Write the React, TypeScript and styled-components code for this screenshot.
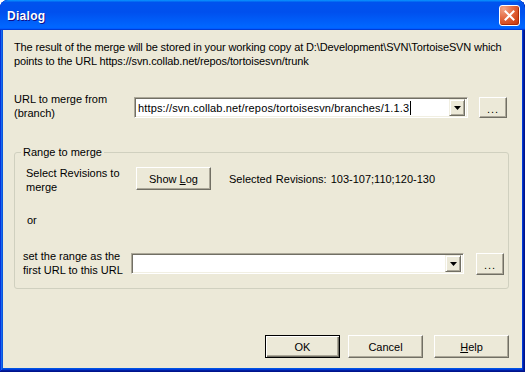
import React from 'react'
import styled, { createGlobalStyle } from 'styled-components'

const GlobalStyle = createGlobalStyle`
  html, body {
    margin: 0;
    padding: 0;
    background: #ffffff;
  }
  body {
    font-family: "Liberation Sans", Arial, sans-serif;
    font-size: 11px;
    color: #000000;
  }
`

const Window = styled.div`
  width: 525px;
  height: 372px;
  box-sizing: border-box;
  display: flex;
  flex-direction: column;
  padding: 0 3px 4px 3px;
  background: #0054e3;
  border-radius: 8px 8px 0 0;
  overflow: hidden;
  box-shadow: inset -1px -1px #00138c, inset 1px 1px #0831d9, inset -2px -2px #001ea0,
    inset 2px 2px #166aee, inset -3px -3px #003bda, inset 3px 3px #0855dd;
`

const TitleBar = styled.div`
  height: 30px;
  margin: 0 -3px;
  display: flex;
  align-items: center;
  justify-content: space-between;
  padding: 0 5px 0 7px;
  background: linear-gradient(
    180deg,
    #0997ff,
    #0053ee 8%,
    #0050ee 40%,
    #06f 88%,
    #06f 93%,
    #005bff 95%,
    #003dd7 96%,
    #003dd7
  );
  border-radius: 8px 8px 0 0;
`

const TitleText = styled.div`
  font-family: "Liberation Sans", Arial, sans-serif;
  font-weight: bold;
  font-size: 12px;
  color: #ffffff;
  text-shadow: 1px 1px #0f1089;
  margin-top: 2px;
  letter-spacing: 0.3px;
`

const CloseButton = styled.div`
  width: 19px;
  height: 19px;
  border: 1px solid #ffffff;
  border-radius: 3px;
  display: flex;
  align-items: center;
  justify-content: center;
  background: radial-gradient(circle at 20% 15%, #f2a587 0%, #e46c44 40%, #d3471a 75%, #c2360d 100%);
  box-shadow: inset -1px -1px #b02c07;
`

const Client = styled.div`
  flex: 1;
  background: #ece9d8;
  padding: 10px 13px 0 11px;
  display: flex;
  flex-direction: column;
`

const Info = styled.div`
  line-height: 14px;
  white-space: nowrap;
  letter-spacing: -0.12px;
`

const Label = styled.div<{ $width: number }>`
  width: ${(p) => p.$width}px;
  line-height: 14px;
`

const UrlRow = styled.div`
  display: flex;
  align-items: flex-start;
  margin-top: 24px;
`

const Combo = styled.div<{ $width: number; $top: number }>`
  width: ${(p) => p.$width}px;
  height: 21px;
  box-sizing: border-box;
  margin-top: ${(p) => p.$top}px;
  display: flex;
  align-items: center;
  background: #ffffff;
  border: 1px solid;
  border-color: #aca899 #ffffff #ffffff #aca899;
  box-shadow: inset 1px 1px #716f64, inset -1px -1px #f1efe2;
  padding: 0 2px 0 2px;
`

const ComboText = styled.div`
  flex: 1;
  padding-left: 1px;
  line-height: 14px;
  white-space: nowrap;
  display: flex;
  align-items: center;
  letter-spacing: 0.15px;
`

const Caret = styled.span`
  display: inline-block;
  width: 1px;
  height: 14px;
  background: #000000;
  margin-left: 1px;
`

const DropButton = styled.div`
  width: 16px;
  height: 17px;
  box-sizing: border-box;
  display: flex;
  align-items: center;
  justify-content: center;
  background: #ece9d8;
  border: 1px solid;
  border-color: #f1efe2 #716f64 #716f64 #f1efe2;
  box-shadow: inset 1px 1px #ffffff, inset -1px -1px #aca899;
`

const Button = styled.div<{ $width: number; $height?: number; $default?: boolean }>`
  width: ${(p) => p.$width}px;
  height: ${(p) => p.$height ?? 23}px;
  box-sizing: border-box;
  display: flex;
  align-items: center;
  justify-content: center;
  background: #ece9d8;
  border: 1px solid;
  border-color: ${(p) => (p.$default ? '#000000' : '#ffffff #716f64 #716f64 #ffffff')};
  box-shadow: ${(p) =>
    p.$default
      ? 'inset 1px 1px #ffffff, inset -1px -1px #716f64, inset -2px -2px #aca899'
      : 'inset -1px -1px #aca899'};
  line-height: 14px;
  white-space: pre;
`

const Dots = styled(Button)<{ $gap: number; $top: number }>`
  margin-left: ${(p) => p.$gap}px;
  margin-top: ${(p) => p.$top}px;
  letter-spacing: 1px;
  padding-top: 2px;
`

const Group = styled.fieldset`
  margin: 25px 0 0 0;
  padding: 0 0 11px 0;
  border: 1px solid #d0d0bf;
  border-radius: 3px;
`

const Legend = styled.legend`
  margin-left: 6px;
  padding: 0 2px;
  line-height: 14px;
`

const GroupRow = styled.div<{ $indent: number; $top: number }>`
  display: flex;
  align-items: flex-start;
  padding-left: ${(p) => p.$indent}px;
  margin-top: ${(p) => p.$top}px;
`

const Revisions = styled.div`
  margin-left: 18px;
  margin-top: 6px;
  line-height: 14px;
  word-spacing: 1px;
`

const LogButton = styled(Button)`
  margin-top: 1px;
`

const ButtonRow = styled.div`
  display: flex;
  justify-content: flex-end;
  margin-top: 46px;
`

const DialogButton = styled(Button)<{ $gap?: number }>`
  margin-left: ${(p) => p.$gap ?? 0}px;
`

const Caption = styled.span``

const Key = styled.span`
  text-decoration: underline;
`

const Arrow = () => (
  <svg width="7" height="4" viewBox="0 0 7 4">
    <path d="M0 0h7L3.5 4z" fill="#000" />
  </svg>
)

const CloseIcon = () => (
  <svg width="11" height="11" viewBox="0 0 11 11">
    <path d="M1.5 1.5l8 8M9.5 1.5l-8 8" stroke="#fff" strokeWidth="2" strokeLinecap="square" />
  </svg>
)

const App = () => {
  const url = 'https://svn.collab.net/repos/tortoisesvn/branches/1.1.3'
  return (
    <>
      <GlobalStyle />
      <Window>
        <TitleBar>
          <TitleText>Dialog</TitleText>
          <CloseButton>
            <CloseIcon />
          </CloseButton>
        </TitleBar>
        <Client>
          <Info>
            The result of the merge will be stored in your working copy at D:\Development\SVN\TortoiseSVN which
            <br />
            points to the URL https://svn.collab.net/repos/tortoisesvn/trunk
          </Info>

          <UrlRow>
            <Label $width={120}>
              URL to merge from
              <br />
              (branch)
            </Label>
            <Combo $width={334} $top={5}>
              <ComboText>
                {url}
                <Caret />
              </ComboText>
              <DropButton>
                <Arrow />
              </DropButton>
            </Combo>
            <Dots $width={28} $height={21} $gap={11} $top={5}>
              ...
            </Dots>
          </UrlRow>

          <Group>
            <Legend>Range to merge</Legend>
            <GroupRow $indent={11} $top={7}>
              <Label $width={110}>
                Select Revisions to
                <br />
                merge
              </Label>
              <LogButton $width={75}>
                <Caption>
                  Show <Key>L</Key>og
                </Caption>
              </LogButton>
              <Revisions>Selected Revisions: 103-107;110;120-130</Revisions>
            </GroupRow>
            <GroupRow $indent={12} $top={19}>
              <Label $width={40}>or</Label>
            </GroupRow>
            <GroupRow $indent={8} $top={22}>
              <Label $width={108}>
                set the range as the
                <br />
                first URL to this URL
              </Label>
              <Combo $width={333} $top={4}>
                <ComboText />
                <DropButton>
                  <Arrow />
                </DropButton>
              </Combo>
              <Dots $width={28} $height={22} $gap={12} $top={4}>
                ...
              </Dots>
            </GroupRow>
          </Group>

          <ButtonRow>
            <DialogButton $width={75} $default>
              OK
            </DialogButton>
            <DialogButton $width={75} $gap={8}>
              Cancel
            </DialogButton>
            <DialogButton $width={75} $gap={11}>
              <Caption>
                <Key>H</Key>elp
              </Caption>
            </DialogButton>
          </ButtonRow>
        </Client>
      </Window>
    </>
  )
}

export default App
